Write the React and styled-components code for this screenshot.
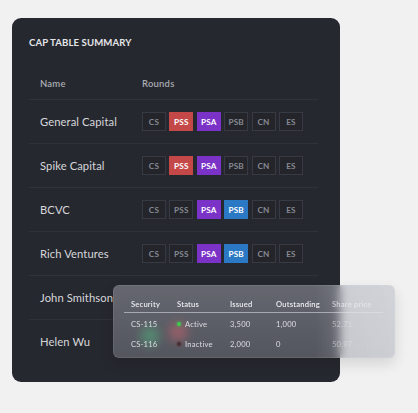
import React from "react";
import styled, { createGlobalStyle } from "styled-components";

const Global = createGlobalStyle`
  html, body { margin: 0; padding: 0; background: #f1f1f1; }
  body { font-family: Lato, "Open Sans", sans-serif; -webkit-font-smoothing: antialiased; }
`;

const Page = styled.div`
  width: 418px;
  height: 413px;
  padding: 18px 0 0 12px;
  box-sizing: border-box;
`;

const Card = styled.div`
  position: relative;
  width: 328px;
  height: 364px;
  box-sizing: border-box;
  background: #26282f;
  border-radius: 9px;
  padding: 19px 22px 0 17px;
`;

const Title = styled.div`
  color: #e4e5e8;
  font-size: 9.6px;
  font-weight: 700;
  letter-spacing: 0.1px;
  line-height: 12px;
`;

const Table = styled.div`
  margin-top: 18px;
  display: flex;
  flex-direction: column;
`;

const Row = styled.div`
  display: grid;
  grid-template-columns: 102px 1fr;
  align-items: center;
  height: ${(p) => (p.$head ? "32px" : "43px")};
  padding-left: 11px;
  border-bottom: ${(p) => (p.$last ? "none" : "1px solid #30323a")};
`;

const HeadCell = styled.div`
  color: #a9abb2;
  font-size: 9.5px;
  font-weight: 600;
  letter-spacing: 0.2px;
`;

const Name = styled.div`
  color: #d6d7db;
  font-size: 11.2px;
  letter-spacing: 0.1px;
`;

const Badges = styled.div`
  display: flex;
  gap: 3.4px;
`;

const colors = { red: "#c54848", purple: "#7a33c6", blue: "#2b78c4" };

const Badge = styled.div`
  width: 24px;
  height: 19px;
  box-sizing: border-box;
  display: flex;
  align-items: center;
  justify-content: center;
  font-size: 8.2px;
  font-weight: 700;
  letter-spacing: 0.2px;
  color: ${(p) => (p.$c ? "#ffffff" : "#868992")};
  background: ${(p) => (p.$c ? colors[p.$c] : "#23252b")};
  border: 1px solid ${(p) => (p.$c ? colors[p.$c] : "#383a43")};
`;

const Overlay = styled.div`
  position: absolute;
  left: 101px;
  top: 267px;
  width: 282px;
  height: 73px;
  box-sizing: border-box;
  border-radius: 6px;
  overflow: hidden;
  background: linear-gradient(180deg, rgba(165,167,177,0.5) 0%, rgba(150,152,162,0.47) 60%, rgba(140,142,152,0.46) 100%);
  backdrop-filter: blur(5px);
  -webkit-backdrop-filter: blur(5px);
  box-shadow: 0 6px 14px rgba(0,0,0,0.12), inset 0 0 0 1px rgba(255,255,255,0.08);
  padding: 10px 12px 0 11px;
`;

const Glow = styled.div`
  position: absolute;
  left: ${(p) => p.$x}px;
  top: ${(p) => p.$y}px;
  width: 30px;
  height: 30px;
  border-radius: 50%;
  background: radial-gradient(circle, ${(p) => p.$color} 0%, transparent 70%);
  filter: blur(3px);
`;

const Fade = styled.div`
  position: absolute;
  right: 0;
  top: 0;
  bottom: 0;
  width: 80px;
  background: linear-gradient(90deg, rgba(220,222,228,0) 0%, rgba(220,222,228,0.4) 100%);
`;

const ORow = styled.div`
  position: relative;
  display: grid;
  grid-template-columns: 46px 53px 46px 56px 1fr;
  align-items: center;
  height: ${(p) => (p.$head ? "17px" : "20px")};
  padding-left: 7px;
  border-bottom: ${(p) => (p.$head ? "1.5px solid rgba(225,227,235,0.55)" : "none")};
  margin-bottom: ${(p) => (p.$head ? "0.5px" : "0")};
`;

const OHead = styled.div`
  color: #eceef2;
  font-size: 7.6px;
  font-weight: 600;
  letter-spacing: 0.2px;
  white-space: nowrap;
  opacity: ${(p) => (p.$faint ? 0.7 : 1)};
  filter: ${(p) => (p.$faint ? "blur(0.4px)" : "none")};
`;

const OCell = styled.div`
  color: #e3e5ea;
  font-size: 7.6px;
  letter-spacing: 0.2px;
  display: flex;
  align-items: center;
  gap: 4px;
  white-space: nowrap;
  opacity: ${(p) => (p.$faint ? 0.55 : 0.92)};
  filter: ${(p) => (p.$faint ? "blur(0.5px)" : "none")};
`;

const Dot = styled.span`
  width: 4px;
  height: 4px;
  border-radius: 50%;
  background: ${(p) => p.$color};
  box-shadow: 0 0 3px ${(p) => p.$color};
`;

const rows = [
  ["General Capital", ["", "red", "purple", "", "", ""]],
  ["Spike Capital", ["", "red", "purple", "", "", ""]],
  ["BCVC", ["", "", "purple", "blue", "", ""]],
  ["Rich Ventures", ["", "", "purple", "blue", "", ""]],
  ["John Smithson", null],
  ["Helen Wu", null],
];
const labels = ["CS", "PSS", "PSA", "PSB", "CN", "ES"];

export default function App() {
  return (
    <>
      <Global />
      <Page>
        <Card>
          <Title>CAP TABLE SUMMARY</Title>
          <Table>
            <Row $head>
              <HeadCell>Name</HeadCell>
              <HeadCell>Rounds</HeadCell>
            </Row>
            {rows.map(([name, b], i) => (
              <Row key={name} $last={i === rows.length - 1}>
                <Name>{name}</Name>
                {b ? (
                  <Badges>
                    {labels.map((l, j) => (
                      <Badge key={l} $c={b[j] || undefined}>{l}</Badge>
                    ))}
                  </Badges>
                ) : (
                  <div />
                )}
              </Row>
            ))}
          </Table>
          <Overlay>
            <Glow $x={22} $y={36} $color="rgba(80,190,130,0.55)" />
            <Glow $x={50} $y={32} $color="rgba(230,100,110,0.5)" />
            <Fade />
            <ORow $head>
              <OHead>Security</OHead>
              <OHead>Status</OHead>
              <OHead>Issued</OHead>
              <OHead>Outstanding</OHead>
              <OHead $faint>Share price</OHead>
            </ORow>
            <ORow>
              <OCell>CS-115</OCell>
              <OCell><Dot $color="#3ed04e" />Active</OCell>
              <OCell>3,500</OCell>
              <OCell>1,000</OCell>
              <OCell $faint>52.71</OCell>
            </ORow>
            <ORow>
              <OCell>CS-116</OCell>
              <OCell><Dot $color="#4a2c30" />Inactive</OCell>
              <OCell>2,000</OCell>
              <OCell>0</OCell>
              <OCell $faint>50.97</OCell>
            </ORow>
          </Overlay>
        </Card>
      </Page>
    </>
  );
}
